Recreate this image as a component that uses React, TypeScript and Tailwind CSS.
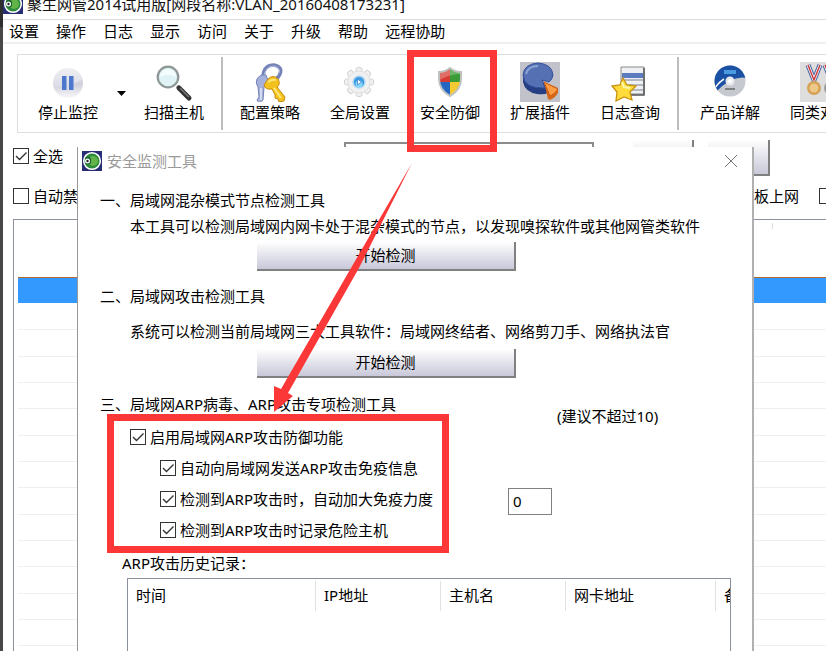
import type { ReactNode } from "react";

const menus = ["设置", "操作", "日志", "显示", "访问", "关于", "升级", "帮助", "远程协助"];

const historyColumns = [
  { title: "时间", width: "w-[188px]" },
  { title: "IP地址", width: "w-[125px]" },
  { title: "主机名", width: "w-[125px]" },
  { title: "网卡地址", width: "w-[150px]" },
  { title: "备注", width: "w-[90px]" },
];

export default function App() {
  return (
    <div className="relative flex h-screen overflow-hidden bg-white font-['Noto_Sans','Noto_Sans_CJK_SC',sans-serif] text-[15px] leading-5 text-black">
      <div className="w-[3px] shrink-0 border-t-[27px] border-[#2e2e2e] bg-[#484848]" />
      <main className="flex min-w-0 flex-1 flex-col">
        <header className="flex h-5 shrink-0 items-end gap-1 border-b border-[#dcdcdc] pb-[5px]">
          <Logo />
          <h1 className="whitespace-nowrap text-[#111]">
            聚生网管2014试用版[网段名称:VLAN_20160408173231]
          </h1>
        </header>

        <nav className="flex h-6 shrink-0 items-center gap-[17px] whitespace-nowrap border-b-2 border-[#f0f0f0] pb-px pl-[6px]">
          {menus.map((m) => (
            <button key={m}>{m}</button>
          ))}
        </nav>

        <Toolbar />

        <FilterBar />

        <HostTable />
      </main>

      <MonitorDialog />

      {/* Annotation marks */}
      <div className="pointer-events-none absolute left-[407px] top-[50px] h-[102px] w-[90px] border-[7px] border-[#fb3737]" />
      <svg
        className="pointer-events-none absolute left-[273px] top-[162px]"
        width="140"
        height="252"
        viewBox="273 162 140 252"
        fill="#fb3737"
      >
        <path d="M412 163 L359 268 L288 393 L293 396 L274 412 L274 386 L281 389 L351 268 Z" />
      </svg>
    </div>
  );
}

function Toolbar() {
  return (
    <div className="ml-[14px] mt-[10px] flex h-[79px] shrink-0 overflow-hidden border-y border-l border-[#dedede] pl-[5px]">
      <Tool label="停止监控">
        <PauseIcon />
      </Tool>
      <button aria-label="更多" className="grid w-4 shrink-0 place-items-center">
        <svg width="9" height="5" viewBox="0 0 9 5">
          <path d="M0 0h9L4.500 5z" />
        </svg>
      </button>
      <Tool label="扫描主机">
        <SearchIcon />
      </Tool>
      <div className="mx-[2px] my-[2px] w-[2px] shrink-0 bg-[#bdbdbd]" />
      <Tool label="配置策略">
        <KeysIcon />
      </Tool>
      <Tool label="全局设置">
        <GearIcon />
      </Tool>
      <Tool label="安全防御">
        <ShieldIcon />
      </Tool>
      <Tool label="扩展插件">
        <PieIcon />
      </Tool>
      <Tool label="日志查询">
        <LogIcon />
      </Tool>
      <div className="my-[2px] ml-[2px] mr-[6px] w-[2px] shrink-0 bg-[#bdbdbd]" />
      <Tool label="产品详解">
        <DiscIcon />
      </Tool>
      <Tool label="同类对比">
        <MedalIcon />
      </Tool>
    </div>
  );
}

function Tool({ label, children }: { label: string; children: ReactNode }) {
  return (
    <button className="flex w-[90px] shrink-0 flex-col items-center whitespace-nowrap pt-[7px]">
      {children}
      <span>{label}</span>
    </button>
  );
}

function Check({ label, checked = false }: { label: string; checked?: boolean }) {
  return (
    <label className="flex items-center gap-1 whitespace-nowrap">
      <span className="grid shrink-0">
        <input
          type="checkbox"
          defaultChecked={checked}
          className="peer col-start-1 row-start-1 size-4 appearance-none border border-[#333] bg-white"
        />
        <svg
          className="pointer-events-none invisible col-start-1 row-start-1 peer-checked:visible"
          width="16"
          height="16"
          viewBox="0 0 16 16"
          fill="none"
          stroke="#333"
          strokeWidth="1.400"
        >
          <path d="M3 8l3.500 3.500L13.500 4.500" />
        </svg>
      </span>
      {label}
    </label>
  );
}

function FilterBar() {
  return (
    <div className="shrink-0 overflow-hidden pl-[10px]">
      <div className="flex h-[43px] items-start pt-[7px]">
        <div className="w-[331px] shrink-0 pt-[6px]">
          <Check label="全选" checked />
        </div>
        <input
          aria-label="搜索"
          className="mt-[2px] h-7 w-[250px] shrink-0 border-2 border-[#8c8c8c] outline-none"
        />
        <button
          aria-label="查找"
          className="ml-[39px] h-9 w-[61px] shrink-0 border-b-2 border-r-2 border-[#808080] bg-linear-to-b from-white to-[#c8c8d8]"
        />
        <button
          aria-label="刷新"
          className="ml-[14px] h-9 w-[62px] shrink-0 border-b-2 border-r-2 border-[#808080] bg-linear-to-b from-white to-[#c8c8d8]"
        />
      </div>
      <div className="mb-1 flex h-[39px] items-center">
        <div className="w-[718px] shrink-0">
          <Check label="自动禁" />
        </div>
        <span className="w-[88px] shrink-0 pl-[23px]">板上网</span>
        <input
          type="checkbox"
          aria-label="上网"
          className="size-4 shrink-0 appearance-none border border-[#333]"
        />
      </div>
    </div>
  );
}

function HostTable() {
  return (
    <div className="ml-[10px] min-h-0 flex-1 overflow-hidden border-l border-t border-[#8b919c] pl-1">
      <table className="w-full border-collapse">
        <thead>
          <tr className="h-[57px]">
            <th className="w-[754px] p-0" />
            <th className="p-0 align-top">
              <div className="mt-[3px] h-[6px] border-l border-[#ddd]" />
            </th>
          </tr>
        </thead>
        <tbody>
          <tr className="h-[26px] border-t border-[#b06a35] bg-[#3399ff]">
            <td colSpan={2} />
          </tr>
          {Array.from({ length: 14 }, (_, i) => (
            <tr key={i} className="h-[26px] border-b border-[#efefef] [&:nth-child(3n)]:h-[27px]">
              <td colSpan={2} />
            </tr>
          ))}
        </tbody>
      </table>
    </div>
  );
}

function DetectButton() {
  return (
    <button className="ml-[157px] h-[29px] w-[259px] border-b-2 border-r-2 border-[#808080] bg-linear-to-b from-white to-[#c8c8d9] pb-[2px]">
      开始检测
    </button>
  );
}

function MonitorDialog() {
  return (
    <section className="absolute bottom-0 left-[77px] right-[72px] top-[147px] flex flex-col overflow-hidden whitespace-nowrap border-l border-r-2 border-l-[#999] border-r-[#b0b0b0] bg-white">
      <div className="flex h-7 shrink-0 items-center gap-[5px] pl-1 pr-[15px]">
        <Logo />
        <h2 className="text-[#999]">安全监测工具</h2>
        <button aria-label="关闭" className="ml-auto">
          <svg width="12" height="12" viewBox="0 0 12 12" stroke="#777">
            <path d="M0 0l12 12M12 0L0 12" />
          </svg>
        </button>
      </div>

      <div className="flex min-h-0 flex-1 flex-col items-start pl-[22px] pr-[21px] pt-[15px]">
        <h3>一、局域网混杂模式节点检测工具</h3>
        <p className="ml-[30px] mt-[6px]">
          本工具可以检测局域网内网卡处于混杂模式的节点，以发现嗅探软件或其他网管类软件
        </p>
        <div className="mt-[6px] flex">
          <DetectButton />
        </div>

        <h3 className="mt-[15px]">二、局域网攻击检测工具</h3>
        <p className="ml-[30px] mt-[15px]">
          系统可以检测当前局域网三大工具软件：局域网终结者、网络剪刀手、网络执法官
        </p>
        <div className="mt-2 flex">
          <DetectButton />
        </div>

        <div className="mt-4 flex gap-[59px]">
          <div>
            <h3>三、局域网ARP病毒、ARP攻击专项检测工具</h3>
            <div className="ml-[7px] w-[342px] border-[7px] border-[#fb3737] pb-px pl-4 *:h-[31px]">
              <Check label="启用局域网ARP攻击防御功能" checked />
              <div className="flex pl-[30px]">
                <Check label="自动向局域网发送ARP攻击免疫信息" checked />
              </div>
              <div className="flex pl-[30px]">
                <Check label="检测到ARP攻击时，自动加大免疫力度" checked />
              </div>
              <div className="flex pl-[30px]">
                <Check label="检测到ARP攻击时记录危险主机" checked />
              </div>
            </div>
          </div>
          <div className="pt-3">
            <label htmlFor="strength" className="ml-[49px] block">
              (建议不超过10)
            </label>
            <input
              id="strength"
              defaultValue="0"
              className="mt-[62px] block h-[27px] w-11 border border-[#808080] px-1 pb-[2px] outline-none"
            />
          </div>
        </div>

        <h4 className="ml-[22px]">ARP攻击历史记录：</h4>
        <div className="ml-[27px] mt-[5px] min-h-0 flex-1 self-stretch overflow-hidden border-x border-t border-[#8b919c]">
          <table className="w-[678px] table-fixed border-collapse">
            <thead>
              <tr>
                {historyColumns.map((c) => (
                  <th key={c.title} className={`${c.width} p-0 pt-[2px] text-left font-normal`}>
                    <div className="h-[30px] border-r border-[#e2e2e2] pl-2 pt-1">{c.title}</div>
                  </th>
                ))}
              </tr>
            </thead>
          </table>
        </div>
      </div>
    </section>
  );
}

function Logo() {
  return (
    <svg className="shrink-0" width="20" height="20" viewBox="0 0 20 20">
      <path d="M0 0h20v20H0z" fill="#272e73" />
      <circle cx="10" cy="10" r="8.300" fill="#2c8b3c" stroke="#fff" strokeWidth="1.500" />
      <circle cx="11" cy="10" r="5" fill="#62b348" />
      <path d="M3 7q4-3 6 1v4q-3 3-6 0z" fill="#155c2b" />
      <circle cx="5.500" cy="10" r="2.500" fill="#fff" />
      <circle cx="5.500" cy="10" r="1.200" fill="#222" />
    </svg>
  );
}

function PauseIcon() {
  return (
    <svg width="40" height="40" viewBox="0 0 40 40">
      <defs>
        <linearGradient id="pause" x1="0" y1="0" x2="0" y2="1">
          <stop offset="0" stopColor="#e9e9ee" />
          <stop offset="0.550" stopColor="#cfd0dc" />
          <stop offset="1" stopColor="#f8f8fa" />
        </linearGradient>
      </defs>
      <circle cx="20" cy="21" r="15" fill="url(#pause)" />
      <path d="M5 23Q20 28 34 17a15 15 0 0 0-29 0z" fill="#fff" opacity=".3" />
      <path d="M14 14h4.500v14H14zM21 14h4.500v14H21z" fill="#4d77cc" />
    </svg>
  );
}

function SearchIcon() {
  return (
    <svg width="40" height="40" viewBox="0 0 40 40">
      <path d="M23 24l3 3" stroke="#999" strokeWidth="3" />
      <path d="M25 26l10 10" stroke="#333" strokeWidth="5" strokeLinecap="round" />
      <path d="M26 26l9 9" stroke="#777" strokeWidth="1.500" />
      <circle cx="14" cy="15" r="10.300" fill="#dff3f6" stroke="#8f9696" strokeWidth="2.200" />
      <path d="M6 15a8 8 0 0 1 16 0q-8-4-16 0z" fill="#f4fcfd" />
    </svg>
  );
}

function KeysIcon() {
  return (
    <svg width="40" height="40" viewBox="0 0 40 40">
      <path d="M13 14q1-11 11-11 9 2 6 9-3 7-10 5" fill="none" stroke="#7582b8" strokeWidth="3.500" />
      <path d="M14 15q1-11 10-11 7 2 5 7" fill="none" stroke="#b4bdde" strokeWidth="1" />
      <path d="M7 17q3-5 9-4l3 8-5 4-1 13-4 3-2-3 2-3-1-10q-3-4-1-8z" fill="#a5b1da" stroke="#7582b8" />
      <path d="M11 26v12" stroke="#e5e9f6" strokeWidth="1.500" />
      <path
        d="M18 17q5-5 10 0 3 5-1 8l8 10-1 4-5 1-1-3-3-1v-3l-3-6q-7 1-8-4z"
        fill="#f4c21e"
        stroke="#c68c10"
      />
      <path d="M18 20q4-3 8-2M24 26l7 10" fill="none" stroke="#ffe67a" strokeWidth="2" />
    </svg>
  );
}

function GearIcon() {
  return (
    <svg width="40" height="40" viewBox="0 0 40 40">
      <g transform="translate(19 20)">
        {[0, 45, 90, 135].map((a) => (
          <rect
            key={a}
            x="-3"
            y="-14.500"
            width="6"
            height="29"
            rx="2"
            fill="#f1f1f1"
            stroke="#d2d2d2"
            transform={`rotate(${a})`}
          />
        ))}
        <circle r="11" fill="#f1f1f1" stroke="#e0e0e0" />
        <circle r="6" fill="#3f9de4" stroke="#b6daf3" strokeWidth="1.500" />
        <circle cy="2" r="3.500" fill="#84d7fa" />
        <path d="M-1.500-3v6l4-3z" fill="#fff" stroke="#287ac4" strokeWidth=".7" />
      </g>
    </svg>
  );
}

function ShieldIcon() {
  const outline = "M20 6q5 4 11 4v7q0 11-11 17Q9 28 9 17v-7q6 0 11-4z";
  return (
    <svg width="40" height="40" viewBox="0 0 40 40">
      <clipPath id="shield">
        <path d={outline} />
      </clipPath>
      <g clipPath="url(#shield)">
        <path d="M8 6h12v14H8z" fill="#d73c34" />
        <path d="M20 6h12v14H20z" fill="#3b9b36" />
        <path d="M8 20h12v16H8z" fill="#2467c3" />
        <path d="M20 20h12v16H20z" fill="#f5cb31" />
        <path d="M8 6h24v6Q18 12 8 19z" fill="#fff" opacity=".25" />
      </g>
      <path d={outline} fill="none" stroke="#bfc3bf" strokeWidth="2" />
    </svg>
  );
}

function PieIcon() {
  return (
    <svg width="40" height="40" viewBox="0 0 40 40">
      <path d="M0 0h40v40H0z" fill="#c2c3ca" />
      <path d="M3 13v7q2 10 14 12 7 1 11-1l-5-12 10-4v-2z" fill="#263e83" />
      <path d="M18 1q14 1 15 12-1 5-4 7l-7-2 3 8Q4 27 3 13 4 2 18 1z" fill="#5571b3" stroke="#344f9b" />
      <path d="M6 12Q8 4 18 4" fill="none" stroke="#8ca4d6" strokeWidth="2" />
      <path d="M24 20l14 6v5q-3 5-8 7l-2-1z" fill="#d76718" />
      <path d="M24 20l14 7q-3 5-8 7z" fill="#ff9c45" stroke="#c85a14" />
    </svg>
  );
}

function LogIcon() {
  return (
    <svg width="40" height="40" viewBox="0 0 40 40">
      <path d="M11 5h23v27H11z" fill="#eef0f4" stroke="#888" />
      <path d="M12 11h21v5H12z" fill="#5c7cc0" />
      <path d="M12 18h21M12 23h21M12 28h21" stroke="#a3a6b0" strokeWidth="1.500" />
      <path d="M34 6v27H18" fill="none" stroke="#555" strokeWidth="1.500" />
      <path
        d="M13 16l4 7 9 1-6 6 2 8-8-3-8 4 1-9-5-6 8-1z"
        fill="#ffdc3c"
        stroke="#c9920d"
        strokeWidth="1.300"
      />
      <path d="M12 20l2 5 6 1" fill="none" stroke="#fff7b0" strokeWidth="2" />
    </svg>
  );
}

function DiscIcon() {
  return (
    <svg width="40" height="40" viewBox="0 0 40 40">
      <clipPath id="disc">
        <circle cx="20" cy="19" r="15.500" />
      </clipPath>
      <g clipPath="url(#disc)">
        <path d="M0 0h40v40H0z" fill="#c6c9cf" />
        <path d="M0 0h40v17Q24 11 6 30L0 28z" fill="#1b51a4" />
        <path d="M4 27q5-7 10-10" fill="none" stroke="#fff" strokeWidth="1.500" />
        <path d="M14 8h12v4H14z" fill="#4a9be0" />
        <path d="M15 27h10" stroke="#666" strokeWidth="1.500" />
      </g>
      <circle cx="20" cy="19" r="4.500" fill="#e8eaee" />
      <circle cx="20" cy="19" r="2" fill="#fff" />
    </svg>
  );
}

function MedalIcon() {
  return (
    <svg width="40" height="40" viewBox="0 0 40 40">
      <path d="M0 0h40v40H0z" fill="#dededf" />
      {[14, 31].map((x) => (
        <g key={x} transform={`translate(${x} 0)`}>
          <path d="M-6 3L0 18L6 3" fill="none" stroke="#4a68a3" strokeWidth="5" />
          <path d="M-6 3L0 18L6 3" fill="none" stroke="#fff" strokeWidth="3" />
          <path d="M-6 3L0 18L6 3" fill="none" stroke="#cc3d3d" strokeWidth="1.500" />
          <circle cy="26" r="7" fill={x === 14 ? "#d5a154" : "#999da3"} />
          <circle cy="26" r="4.500" fill={x === 14 ? "#edc888" : "#c6c9cc"} />
        </g>
      ))}
    </svg>
  );
}
